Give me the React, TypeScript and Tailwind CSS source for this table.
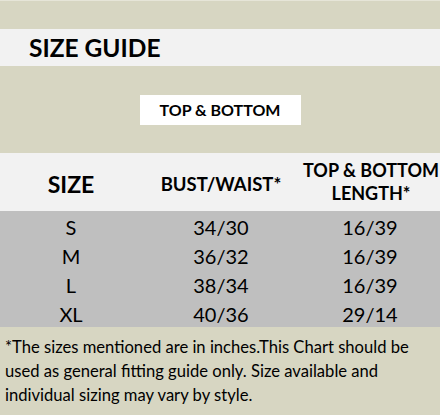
const rows = [
  { size: 'S', bust: '34/30', length: '16/39' },
  { size: 'M', bust: '36/32', length: '16/39' },
  { size: 'L', bust: '38/34', length: '16/39' },
  { size: 'XL', bust: '40/36', length: '29/14' },
]

export default function App() {
  return (
    <div className="w-[440px] h-[415px] overflow-hidden bg-[#d7d6c2] text-black font-['Lato','Open_Sans',sans-serif]">
      <div className="h-[29px] border-t border-[#e6e5d8]" />

      <div className="h-[37px] bg-[#f2f2f2] flex items-center pl-[29px]">
        <h1 className="text-[24.5px] font-bold leading-none pt-[2px]">SIZE GUIDE</h1>
      </div>

      <div className="h-[87px] flex items-center justify-center">
        <div className="w-[161px] h-[30px] bg-white flex items-center justify-center">
          <span className="text-[16px] font-bold leading-none">TOP &amp; BOTTOM</span>
        </div>
      </div>

      <div className="grid grid-cols-[142px_158px_140px] h-[58px] bg-[#f2f2f2] items-center text-center font-bold">
        <div className="text-[23px] leading-none pt-[4px]">SIZE</div>
        <div className="text-[18.5px] leading-none pt-[4px]">BUST/WAIST*</div>
        <div className="text-[18px] leading-[23px] pl-[2px]">
          TOP &amp; BOTTOM
          <br />
          LENGTH*
        </div>
      </div>

      <div className="bg-[#bfbfbf] h-[116px] pt-[1px]">
        {rows.map((r) => (
          <div
            key={r.size}
            className="grid grid-cols-[142px_158px_140px] h-[29px] items-center text-center text-[20px] leading-none"
          >
            <div>{r.size}</div>
            <div>{r.bust}</div>
            <div>{r.length}</div>
          </div>
        ))}
      </div>

      <p className="px-[5px] pt-[8px] text-[16.6px] leading-[24px]">
        *The sizes mentioned are in inches.This Chart should be used as general fitting guide only. Size available and
        individual sizing may vary by style.
      </p>
    </div>
  )
}
